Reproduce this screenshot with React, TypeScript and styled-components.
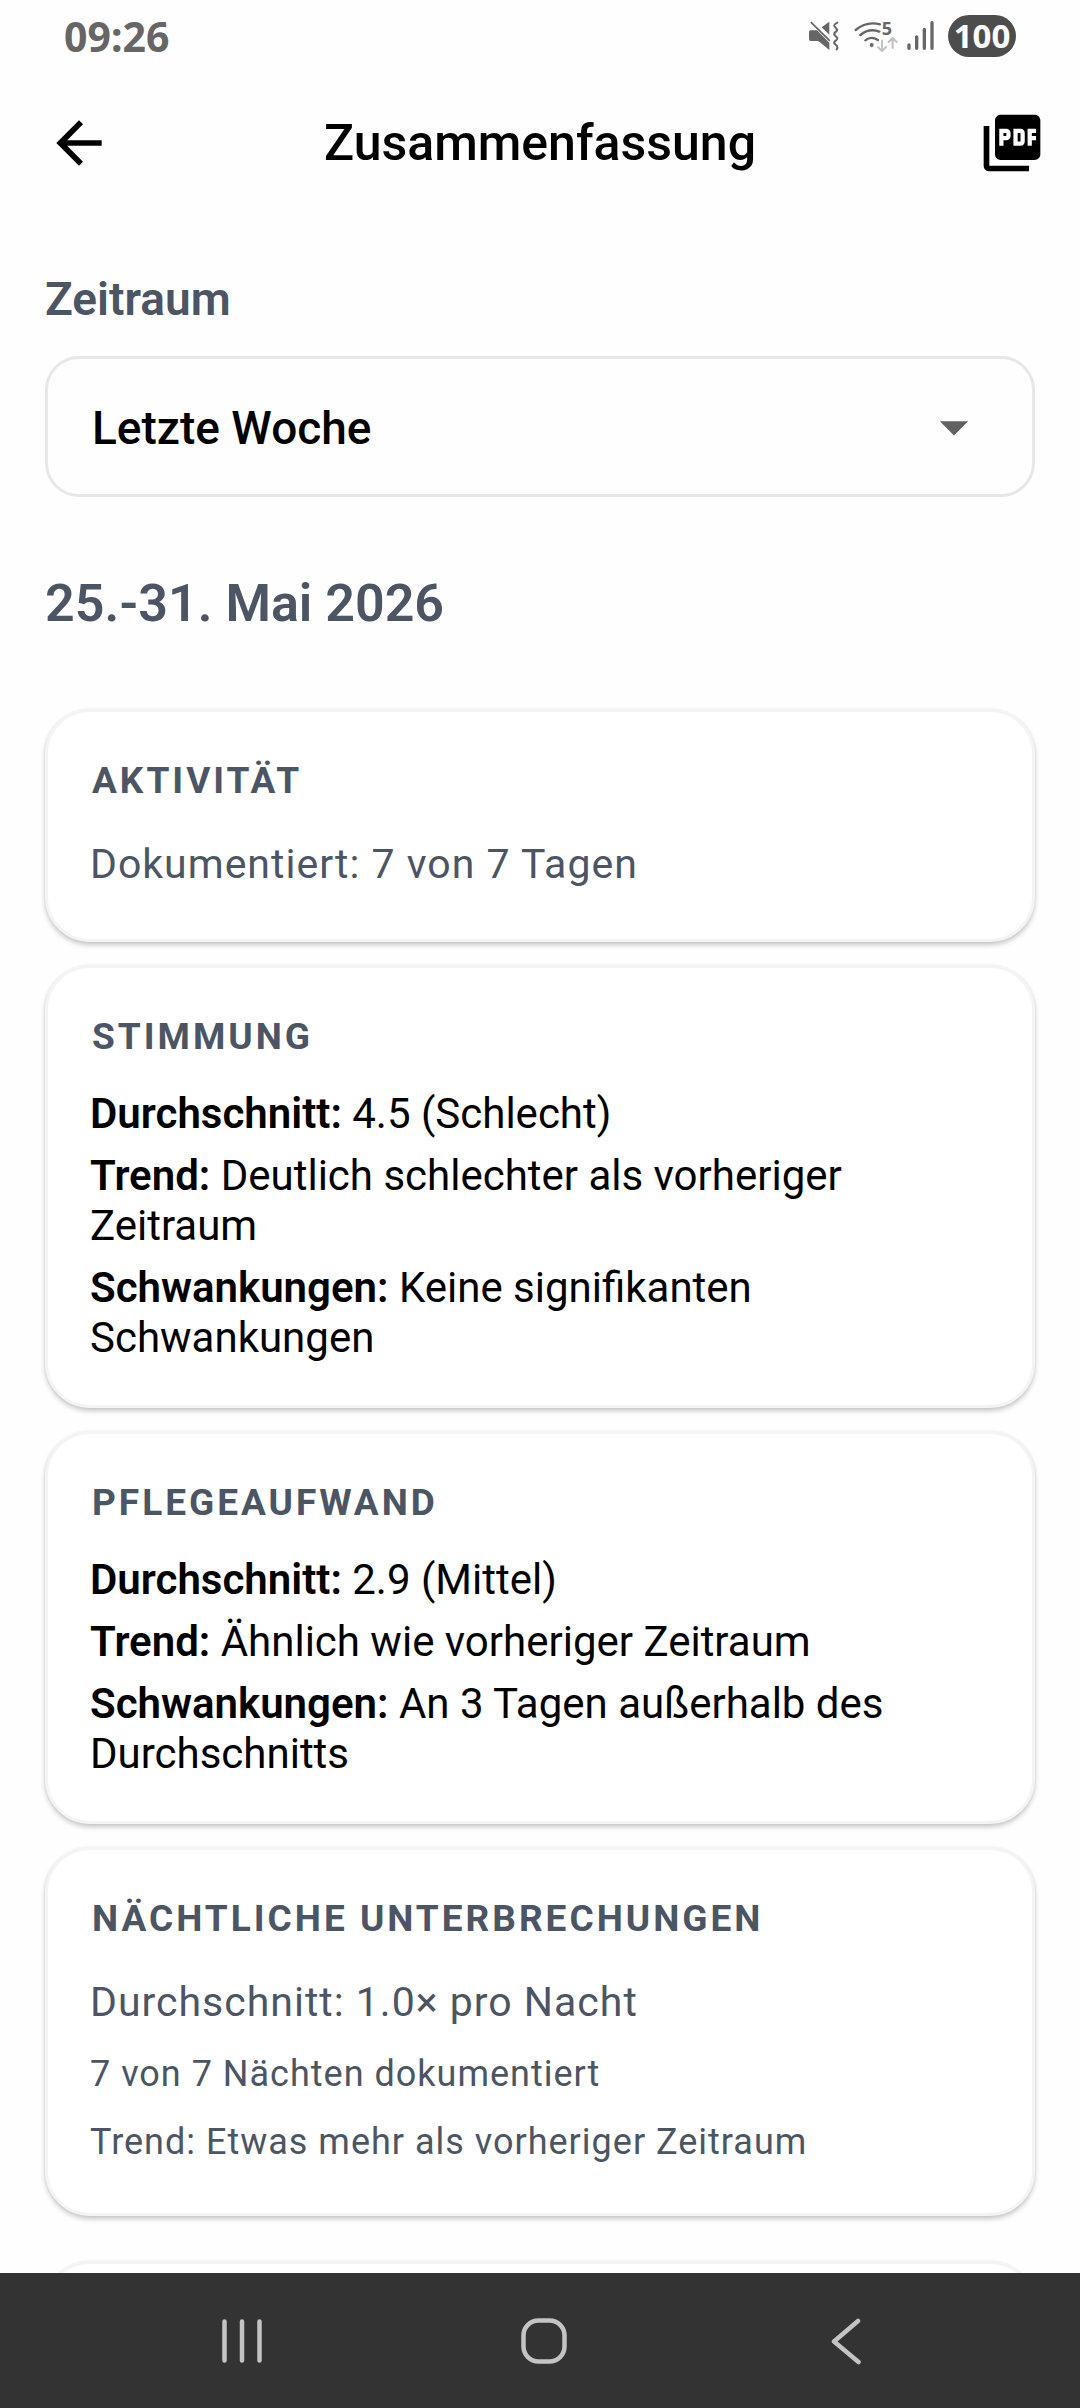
import React from "react";
import styled, { createGlobalStyle } from "styled-components";
import { MdArrowBack, MdArrowDropDown, MdPictureAsPdf } from "react-icons/md";

const GlobalStyle = createGlobalStyle`
  *, *::before, *::after { box-sizing: border-box; }
  body {
    margin: 0;
    background: #fefefe;
    color: #000;
    font-family: Roboto, "Liberation Sans", sans-serif;
  }
`;

const slate = "#4b5563";

const Screen = styled.div`
  display: flex;
  flex-direction: column;
  height: 100vh;
  background: #fefefe;
`;

const StatusBar = styled.div`
  display: flex;
  align-items: center;
  justify-content: space-between;
  flex: none;
  height: 72px;
  padding: 0 64px;
  font-family: "Noto Sans", sans-serif;
  font-weight: 700;
`;

const Clock = styled.time`
  font-size: 41px;
  line-height: 56px;
  color: #666;
`;

const StatusIcons = styled.div`
  display: flex;
  align-items: center;
  gap: 9px;

  svg {
    overflow: visible;
  }
`;

const Battery = styled.span`
  display: flex;
  align-items: center;
  justify-content: center;
  width: 68px;
  height: 42px;
  border-radius: 21px;
  background: #4d4d4d;
  color: #fff;
  font-size: 33px;
  line-height: 42px;
`;

const AppBar = styled.header`
  display: grid;
  grid-template-columns: 1fr auto 1fr;
  align-items: center;
  flex: none;
  height: 142px;
  padding: 0 34px;
`;

const IconButton = styled.button<{ $end?: boolean }>`
  display: flex;
  justify-self: ${(p) => (p.$end ? "end" : "start")};
  padding: ${(p) => (p.$end ? "0" : "0 11px")};
  border: 0;
  background: none;
  color: inherit;
  font-size: 68px;
`;

const Title = styled.h1`
  margin: 0;
  font-size: 50px;
  line-height: 60px;
  font-weight: 500;
`;

const Content = styled.main`
  flex: 1;
  min-height: 0;
  padding: 58px 45px 0;
  overflow-y: auto;
  scrollbar-width: none;
`;

const Label = styled.label`
  display: block;
  margin-bottom: 30px;
  color: ${slate};
  font-size: 46px;
  line-height: 54px;
  font-weight: 600;
`;

const SelectBox = styled.div`
  position: relative;
`;

const Select = styled.select`
  display: block;
  width: 100%;
  height: 141px;
  padding: 2px 120px 0 44px;
  border: 3px solid #e5e7eb;
  border-radius: 34px;
  appearance: none;
  background: transparent;
  color: #000;
  font-family: inherit;
  font-size: 46px;
  font-weight: 500;
`;

const SelectArrow = styled(MdArrowDropDown)`
  position: absolute;
  top: 50%;
  right: 47px;
  transform: translateY(-50%);
  color: #616161;
  font-size: 68px;
  pointer-events: none;
`;

const Period = styled.h2`
  margin: 77px 0 75px;
  color: ${slate};
  font-size: 52px;
  line-height: 60px;
  font-weight: 600;
`;

const Cards = styled.div`
  display: flex;
  flex-direction: column;
  gap: 23px;
`;

const Card = styled.section<{ $spaced?: boolean }>`
  min-height: 233px;
  margin-top: ${(p) => (p.$spaced ? "22px" : "0")};
  padding: 43px 42px 41px;
  border: 3px solid #f3f4f6;
  border-radius: 45px;
  background: #fff;
  box-shadow: 0 3px 5px rgba(0, 0, 0, 0.22), 0 0 3px rgba(0, 0, 0, 0.04);
`;

const CardTitle = styled.h3`
  margin: 0 0 25px;
  padding-left: 2px;
  color: ${slate};
  font-size: 37px;
  line-height: 52px;
  font-weight: 700;
  letter-spacing: 3px;
  text-transform: uppercase;
`;

const Lead = styled.p`
  margin: 0 0 10px;
  color: ${slate};
  font-size: 41px;
  line-height: 64px;
  letter-spacing: 1px;

  &:last-child {
    margin-bottom: 0;
  }
`;

const Note = styled.p`
  margin: 0 0 8px;
  color: ${slate};
  font-size: 36px;
  line-height: 60px;
  letter-spacing: 1px;

  &:last-child {
    margin-bottom: 0;
  }
`;

const Facts = styled.div`
  display: flex;
  flex-direction: column;
  gap: 12px;
  padding: 1px 0;
`;

const Fact = styled.p`
  margin: 0;
  font-size: 42px;
  line-height: 50px;
`;

const FactName = styled.strong`
  font-weight: 600;
`;

const NavBar = styled.nav`
  display: flex;
  flex: none;
  height: 135px;
  padding: 0 83px 0 91px;
  background: #333;
`;

const NavButton = styled.button`
  display: flex;
  flex: 1;
  align-items: center;
  justify-content: center;
  padding: 0;
  border: 0;
  background: none;
  color: #c4c4c4;
`;

const MuteIcon = () => (
  <svg width="37" height="32" viewBox="84 60 111 96" fill="none" aria-hidden="true">
    <path d="M92 91h19l37 37v22l-33-27H92q-5 0-5-5V96q0-5 5-5z" fill="#666" />
    <path d="M125 82l23-17v39z" fill="#666" />
    <path d="M94 68l54 53" stroke="#666" strokeWidth="5" strokeLinecap="round" />
    <path
      d="M172 68q-11 6-9 10l7 9q4 4-2 8-7 5-5 9l8 9q3 4-3 8-7 5-5 9l8 8q3 4-1 10"
      stroke="#666"
      strokeWidth="6"
      strokeLinecap="round"
    />
  </svg>
);

const WifiIcon = () => (
  <svg width="44" height="32" viewBox="222 60 132 96" fill="none" aria-hidden="true">
    <g stroke="#666" strokeWidth="7" strokeLinecap="round">
      <path d="M227 90q32-27 73-17" />
      <path d="M241 105q27-22 57-10" />
      <path d="M256 121q17-14 38-1" />
    </g>
    <circle cx="275" cy="135" r="6" fill="#666" />
    <text x="305" y="106" fill="#666" fontSize="54" fontWeight="700" fontFamily="Noto Sans, sans-serif">
      5
    </text>
    <g stroke="#c2c2c2" strokeWidth="6" strokeLinecap="round" strokeLinejoin="round">
      <path d="M306 122v30M294 141l12 12 12-12" />
      <path d="M338 144v-30M326 126l12-12 12 12" />
    </g>
  </svg>
);

const SignalIcon = () => (
  <svg width="32" height="32" viewBox="381 60 96 96" aria-hidden="true">
    <g stroke="#666" strokeWidth="10" strokeLinecap="round">
      <path d="M387 135v10M410 111v34M433 88v57M456 68v77" />
    </g>
  </svg>
);

const RecentsIcon = () => (
  <svg width="48" height="48" viewBox="0 0 48 48" fill="none" aria-hidden="true">
    <path d="M6.500 4.500v39M24 4.500v39M41.500 4.500v39" stroke="currentColor" strokeWidth="4.500" strokeLinecap="round" />
  </svg>
);

const HomeIcon = () => (
  <svg width="48" height="48" viewBox="0 0 48 48" fill="none" aria-hidden="true">
    <rect x="3.500" y="3.500" width="41" height="41" rx="15" stroke="currentColor" strokeWidth="4.500" />
  </svg>
);

const BackIcon = () => (
  <svg width="48" height="48" viewBox="0 0 48 48" fill="none" aria-hidden="true">
    <path d="M36 4L12 24.500 36.500 45" stroke="currentColor" strokeWidth="4.500" strokeLinecap="round" strokeLinejoin="round" />
  </svg>
);

type FactItem = { name: string; value: string };

const mood: FactItem[] = [
  { name: "Durchschnitt:", value: "4.5 (Schlecht)" },
  { name: "Trend:", value: "Deutlich schlechter als vorheriger Zeitraum" },
  { name: "Schwankungen:", value: "Keine signifikanten Schwankungen" },
];

const care: FactItem[] = [
  { name: "Durchschnitt:", value: "2.9 (Mittel)" },
  { name: "Trend:", value: "Ähnlich wie vorheriger Zeitraum" },
  { name: "Schwankungen:", value: "An 3 Tagen außerhalb des Durchschnitts" },
];

const FactCard = ({ title, items }: { title: string; items: FactItem[] }) => (
  <Card>
    <CardTitle>{title}</CardTitle>
    <Facts>
      {items.map((item) => (
        <Fact key={item.name}>
          <FactName>{item.name}</FactName> {item.value}
        </Fact>
      ))}
    </Facts>
  </Card>
);

export default function App() {
  return (
    <>
      <GlobalStyle />
      <Screen>
        <StatusBar>
          <Clock>09:26</Clock>
          <StatusIcons>
            <MuteIcon />
            <WifiIcon />
            <SignalIcon />
            <Battery>100</Battery>
          </StatusIcons>
        </StatusBar>
        <AppBar>
          <IconButton type="button" aria-label="Zurück">
            <MdArrowBack />
          </IconButton>
          <Title>Zusammenfassung</Title>
          <IconButton type="button" aria-label="Als PDF exportieren" $end>
            <MdPictureAsPdf />
          </IconButton>
        </AppBar>
        <Content>
          <Label htmlFor="zeitraum">Zeitraum</Label>
          <SelectBox>
            <Select id="zeitraum" defaultValue="week">
              <option value="week">Letzte Woche</option>
            </Select>
            <SelectArrow aria-hidden="true" />
          </SelectBox>
          <Period>25.-31. Mai 2026</Period>
          <Cards>
            <Card>
              <CardTitle>Aktivität</CardTitle>
              <Lead>Dokumentiert: 7 von 7 Tagen</Lead>
            </Card>
            <FactCard title="Stimmung" items={mood} />
            <FactCard title="Pflegeaufwand" items={care} />
            <Card>
              <CardTitle>Nächtliche Unterbrechungen</CardTitle>
              <Lead>Durchschnitt: 1.0× pro Nacht</Lead>
              <Note>7 von 7 Nächten dokumentiert</Note>
              <Note>Trend: Etwas mehr als vorheriger Zeitraum</Note>
            </Card>
            <Card $spaced />
          </Cards>
        </Content>
        <NavBar>
          <NavButton type="button" aria-label="Letzte Apps">
            <RecentsIcon />
          </NavButton>
          <NavButton type="button" aria-label="Startbildschirm">
            <HomeIcon />
          </NavButton>
          <NavButton type="button" aria-label="Zurück">
            <BackIcon />
          </NavButton>
        </NavBar>
      </Screen>
    </>
  );
}
